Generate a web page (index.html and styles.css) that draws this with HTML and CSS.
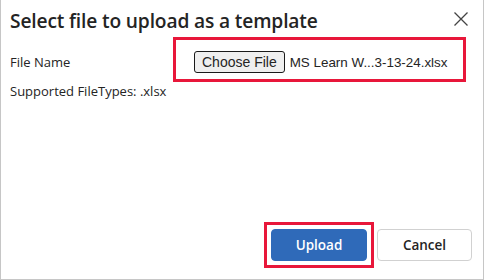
FILE: index.html
```html
<html>
<head>
  <title>Select file to upload</title>
  <link rel="stylesheet" href="styles.css">
</head>
<body>
<div class="dialog">
  <div class="header">
    <h1 class="title">Select file to upload as a template</h1>
    <button class="close" aria-label="Close">
      <svg width="16" height="16" viewBox="0 0 16 16"><path d="M1.5 1.5 L14.5 14.5 M14.5 1.5 L1.5 14.5" stroke="#444" stroke-width="1.3" fill="none"/></svg>
    </button>
  </div>

  <div class="row">
    <span class="label">File Name</span>
    <div class="highlight file-box">
      <span class="file-btn">Choose File</span>
      <span class="file-name">MS Learn W...3-13-24.xlsx</span>
    </div>
  </div>

  <p class="note">Supported FileTypes: .xlsx</p>

  <div class="footer">
    <div class="highlight btn-box">
      <button class="btn primary">Upload</button>
    </div>
    <button class="btn secondary">Cancel</button>
  </div>
</div>
</body>
</html>
```

FILE: styles.css
```css
body {margin: 0; font-family: "Open Sans", "Noto Sans", sans-serif; color: #242424;}

.dialog {width: 484px; height: 280px; box-sizing: border-box; border: 1px solid #c6c6c6; border-top: none; display: flex; flex-direction: column; background: #fff;}

.header {display: flex; justify-content: space-between; align-items: flex-start; padding: 9px 14px 0 9px; height: 28px;}
.title {margin: 0; font-size: 19.2px; font-weight: 600; line-height: 24px; letter-spacing: -0.15px;}
.close {border: none; background: none; padding: 0; margin-top: 2px; width: 16px; height: 16px; cursor: pointer;}
.close svg {display: block;}

.row {display: flex; align-items: flex-start;}
.label {width: 172px; flex-shrink: 0; box-sizing: border-box; padding: 16px 0 0 9px; font-size: 13px; line-height: 18px;}

.highlight {border: 3px solid #e8173a;}
.file-box {width: 293px; height: 45px; flex-shrink: 0; box-sizing: border-box; padding: 11px 10px 6px 18px; display: flex; align-items: center; gap: 5px; white-space: nowrap;}
.file-btn {font-family: "Liberation Sans", Arial, sans-serif; font-size: 14px; background: #efefef; border: 1px solid #1a1a1a; border-radius: 3px; padding: 2px 7px; line-height: 16px;}
.file-name {font-family: "Liberation Sans", Arial, sans-serif; font-size: 13.4px;}

.note {margin: 0 0 0 9px; font-size: 13px; line-height: 18px;}

.footer {margin-top: auto; display: flex; justify-content: flex-end; align-items: center; gap: 3px; padding: 0 11px 11px 0;}
.btn-box {padding: 4px; display: flex;}
.btn {width: 96px; height: 32px; border-radius: 4px; font-family: "Open Sans", sans-serif; font-size: 13.5px; font-weight: 600; cursor: pointer;}
.primary {background: #2f6ab9; color: #fff; border: 1px solid #2f6ab9;}
.secondary {background: #fff; color: #242424; border: 1px solid #d1d1d1; width: 95px;}
```
